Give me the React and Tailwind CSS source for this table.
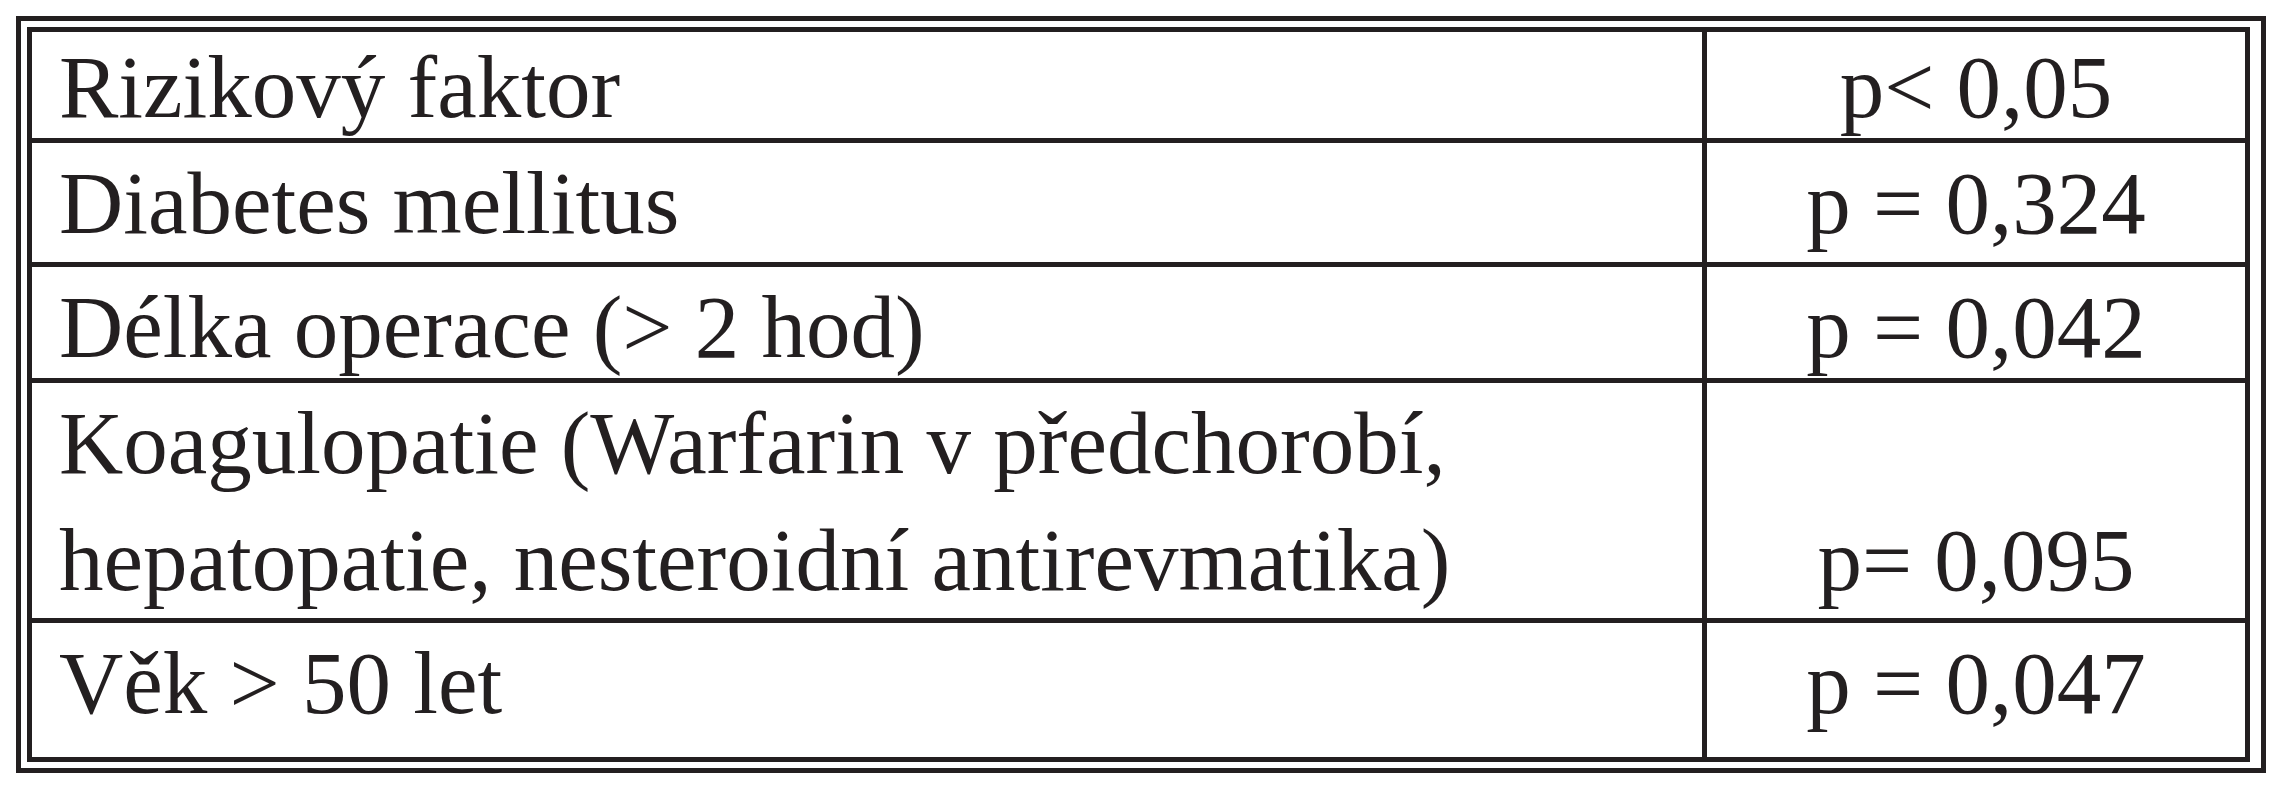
import React from "react";

const rows = [
  { label: ["Rizikový faktor"], value: "p< 0,05", h: "h-[111px]", lead: "leading-[110px]", pt: "pt-0", vpt: "pt-0" },
  { label: ["Diabetes mellitus"], value: "p = 0,324", h: "h-[124px]", lead: "leading-[117px]", pt: "pt-[2px]", vpt: "pt-[2px]" },
  { label: ["Délka operace (> 2 hod)"], value: "p = 0,042", h: "h-[116px]", lead: "leading-[117px]", pt: "pt-[2px]", vpt: "pt-[2px]" },
  {
    label: ["Koagulopatie (Warfarin v předchorobí,", "hepatopatie, nesteroidní antirevmatika)"],
    value: "p= 0,095",
    h: "h-[240px]",
    lead: "leading-[117px]",
    pt: "pt-[2px]",
    vpt: "pt-[119px]",
  },
  { label: ["Věk > 50 let"], value: "p = 0,047", h: "h-[134px]", lead: "leading-[117px]", pt: "pt-[2px]", vpt: "pt-[2px]", last: true },
];

const App = () => {
  return (
    <div className="min-h-[800px] w-[2288px] bg-white pt-[16px] pl-[16px] font-['Liberation_Serif',serif] text-[89px] text-[#231f20]">
      <div className="w-[2250px] h-[757px] border-[5px] border-[#231f20] pt-[6px] pl-[6px] pb-[6px] pr-[11px]">
        <div className="flex flex-col w-full h-full border-[5px] border-[#231f20]">
          {rows.map((row, i) => (
            <div
              key={i}
              className={`flex ${row.h} ${row.last ? "" : "border-b-[5px] border-[#231f20]"}`}
            >
              <div className={`w-[1675px] shrink-0 border-r-[5px] border-[#231f20] pl-[27px] whitespace-nowrap ${row.lead} ${row.pt}`}>
                {row.label.map((line, j) => (
                  <div key={j}>{line}</div>
                ))}
              </div>
              <div className={`flex-1 text-center whitespace-nowrap ${row.lead} ${row.vpt}`}>
                {row.value}
              </div>
            </div>
          ))}
        </div>
      </div>
    </div>
  );
};

export default App;
